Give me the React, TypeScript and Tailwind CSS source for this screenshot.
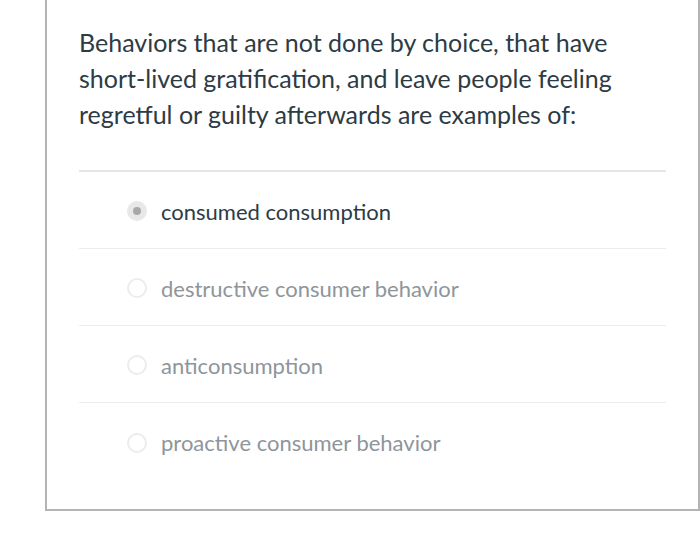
const options = [
  { label: "consumed consumption", selected: true },
  { label: "destructive consumer behavior", selected: false },
  { label: "anticonsumption", selected: false },
  { label: "proactive consumer behavior", selected: false },
];

const Radio = ({ selected }: { selected: boolean }) => {
  if (selected) {
    return (
      <span className="w-[20px] h-[20px] rounded-full bg-[#e8e8e8] flex items-center justify-center shrink-0">
        <span className="w-[8px] h-[8px] rounded-full bg-[#a8a8a8]" />
      </span>
    );
  }
  return <span className="w-[20px] h-[20px] rounded-full border-2 border-[#ececec] bg-white shrink-0" />;
};

const App = () => {
  return (
    <div
      className="w-[700px] h-[545px] bg-white overflow-hidden"
      style={{ fontFamily: "Lato, 'Open Sans', sans-serif" }}
    >
      <div className="ml-[45px] w-[655px] h-[511px] border-l-2 border-r-2 border-b-2 border-[#b4b4b4] px-[32px] pt-[24px]">
        <p className="text-[25px] leading-[36px] text-[#2d3b45] pb-[38px] border-b-2 border-[#e6e6e6] whitespace-nowrap">
          Behaviors that are not done by choice, that have
          <br />
          short-lived gratification, and leave people feeling
          <br />
          regretful or guilty afterwards are examples of:
        </p>

        {/* Answers */}
        <div>
          {options.map((o, i) => (
            <div
              key={o.label}
              className={
                "h-[77px] flex items-center gap-[14px] pl-[48px] pt-[2px] " +
                (i < options.length - 1 ? "border-b border-[#ececec]" : "")
              }
            >
              <Radio selected={o.selected} />
              <span className={"text-[22px] " + (o.selected ? "text-[#2d3b45]" : "text-[#8e959b]")}>
                {o.label}
              </span>
            </div>
          ))}
        </div>
      </div>
    </div>
  );
};

export default App;
